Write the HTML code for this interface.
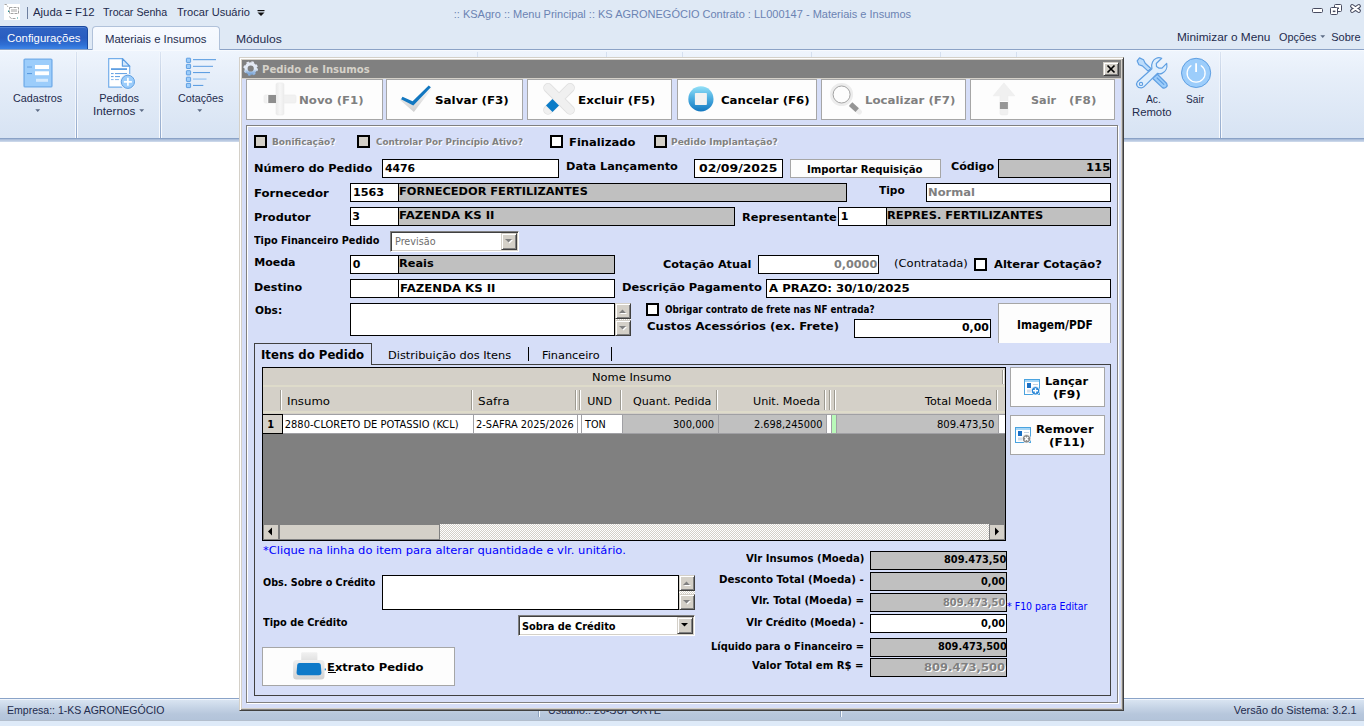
<!DOCTYPE html>
<html lang="pt-BR">
<head>
<meta charset="utf-8">
<title>KSAgro :: Menu Principal - Pedido de Insumos</title>
<style>
html,body{margin:0;padding:0;background:#fff;}
body{width:1364px;height:726px;overflow:hidden;}
#app{position:relative;width:1364px;height:726px;overflow:hidden;background:#fff;font-family:"Liberation Sans",sans-serif;}
#app div,#app svg{position:absolute;box-sizing:border-box;}
#app svg{overflow:visible;}
.t{white-space:pre;line-height:normal;transform-origin:0 0;}
.t u{text-decoration:underline;text-underline-offset:1px;}
.in{background:#fff;border:1px solid #000;}
.gr{background:#c0c0c0;border:1px solid #000;}
.btn{background:#fdfdfd;border:1px solid #a6a6a6;}
.cb{background:#fff;border:2px solid #000;}
.cbd{background:#d4d0c8;border:2px solid #000;}
.sb{background:#d4d0c8;border:1px solid;border-color:#d4d0c8 #404040 #404040 #d4d0c8;box-shadow:inset 1px 1px 0 #fff,inset -1px -1px 0 #808080;}
.fsb{background:#d4d0c8;border:1px solid #808080;}
.sunk{border:1px solid;border-color:#808080 #fff #fff #808080;box-shadow:inset 1px 1px 0 #404040,inset -1px -1px 0 #d4d0c8;background:#fff;}
.dith{background:conic-gradient(#fff 25%,#d4d0c8 0 50%,#fff 0 75%,#d4d0c8 0) 0 0/2px 2px;}

</style>
</head>
<body>
<div id="app">
<div style="left:0px;top:0px;width:1364px;height:50px;background:#dfe9f5;"></div>
<div style="left:0px;top:49px;width:1364px;height:1px;background:#8ba2c6;"></div>
<div style="left:0px;top:50px;width:1364px;height:88px;background:linear-gradient(#eff5fd 0%,#e6eef9 30%,#d7e3f3 100%);"></div>
<div style="left:0px;top:50px;width:1364px;height:1px;background:#f7fafe;"></div>
<div style="left:0px;top:138px;width:1364px;height:1px;background:#8aa2c6;"></div>
<div style="left:0px;top:139px;width:1364px;height:1px;background:#a9bcd9;"></div>
<div style="left:0px;top:140px;width:1364px;height:1px;background:#b9c9e1;"></div>
<div style="left:0px;top:141px;width:1364px;height:1px;background:#c9d6e9;"></div>
<div style="left:75px;top:52px;width:3px;height:86px;background:linear-gradient(rgba(255,255,255,0.2),rgba(255,255,255,0.85));"></div>
<div style="left:76px;top:52px;width:1px;height:86px;background:linear-gradient(rgba(150,172,205,0.25),#8fa7cb);"></div>
<div style="left:159px;top:52px;width:3px;height:86px;background:linear-gradient(rgba(255,255,255,0.2),rgba(255,255,255,0.85));"></div>
<div style="left:160px;top:52px;width:1px;height:86px;background:linear-gradient(rgba(150,172,205,0.25),#8fa7cb);"></div>
<div style="left:1219px;top:52px;width:3px;height:86px;background:linear-gradient(rgba(255,255,255,0.2),rgba(255,255,255,0.85));"></div>
<div style="left:1220px;top:52px;width:1px;height:86px;background:linear-gradient(rgba(150,172,205,0.25),#8fa7cb);"></div>
<div style="left:477px;top:52px;width:1px;height:6px;background:#d5e0f0;"></div>
<div style="left:606px;top:52px;width:1px;height:6px;background:#d5e0f0;"></div>
<div style="left:682px;top:52px;width:1px;height:6px;background:#d5e0f0;"></div>
<div style="left:811px;top:52px;width:1px;height:6px;background:#d5e0f0;"></div>
<div style="left:940px;top:52px;width:1px;height:6px;background:#d5e0f0;"></div>
<div style="left:1016px;top:52px;width:1px;height:6px;background:#d5e0f0;"></div>
<div style="left:4px;top:4px;width:16px;height:16px;background:#fff;"></div>
<svg style="left:3px;top:2px" width="19" height="19" viewBox="3 2 19 19"><path d="M4.500 4.500 H6.500 L8 7 M9.500 7.500 H18.500 V13.500 H9.500 Z M12 9 V12 M14 9 V12 M16 9 V12 M9.500 16.500 L11 18.500 H16.500" fill="none" stroke="#8a8a8a" stroke-width="0.800" stroke-dasharray="3 1"/><path d="M8.500 10.500 V12 M17 18 H18" stroke="#2a9a9a" stroke-width="1" fill="none"/></svg>
<div style="left:27px;top:7px;width:1px;height:12px;background:#6d7f9e;"></div>
<div class="t" style="left:32.75px;top:6.00px;font-family:&quot;Liberation Sans&quot;, sans-serif;font-size:11px;font-weight:normal;color:#1e2b4d;transform:scaleX(1.0339);">Ajuda = F12</div>
<div class="t" style="left:103.25px;top:6.00px;font-family:&quot;Liberation Sans&quot;, sans-serif;font-size:11px;font-weight:normal;color:#1e2b4d;transform:scaleX(0.9697);">Trocar Senha</div>
<div class="t" style="left:176.75px;top:6.00px;font-family:&quot;Liberation Sans&quot;, sans-serif;font-size:11px;font-weight:normal;color:#1e2b4d;transform:scaleX(1.0069);">Trocar Usuário</div>
<svg style="left:257px;top:9px" width="8" height="8" viewBox="257 9 8 8"><rect x="257.500" y="10" width="7" height="1.200" fill="#111"/><path d="M257.500 12.500 H264.500 L261 16 Z" fill="#111"/></svg>
<div class="t" style="left:453.75px;top:8.00px;font-family:&quot;Liberation Sans&quot;, sans-serif;font-size:11px;font-weight:normal;color:#6b83b3;">:: KSAgro :: Menu Principal :: KS AGRONEGÓCIO Contrato : LL000147 - Materiais e Insumos</div>
<svg style="left:1310px;top:2px" width="54" height="16" viewBox="1310 2 54 16"><rect x="1312.500" y="8.500" width="10" height="4" rx="1" fill="#fff" stroke="#474b60"/><rect x="1334.500" y="4.500" width="7" height="7" rx="1" fill="#fff" stroke="#474b60"/><rect x="1337" y="7.500" width="2" height="1.500" fill="#474b60"/><rect x="1330.500" y="7.500" width="7" height="7" rx="1" fill="#fff" stroke="#474b60"/><rect x="1332.800" y="10.600" width="2.600" height="1.500" fill="#474b60"/><path d="M1352.200 6.200 L1358.800 10.800 M1358.800 6.200 L1352.200 10.800" stroke="#474b60" stroke-width="4.200" stroke-linecap="round"/><path d="M1352.200 6.200 L1358.800 10.800 M1358.800 6.200 L1352.200 10.800" stroke="#fff" stroke-width="2.100" stroke-linecap="round"/></svg>
<div style="left:0px;top:26px;width:88px;height:23px;background:linear-gradient(#2f64c4 0%,#2a5dc0 50%,#2f6fd4 80%,#3d84e6 100%);border:1px solid #1a489e;border-left:none;border-bottom:none;border-radius:0 4px 0 0;box-shadow:inset 0 1px 0 rgba(120,160,230,0.5);"></div>
<div class="t" style="left:7.25px;top:32.00px;font-family:&quot;Liberation Sans&quot;, sans-serif;font-size:11px;font-weight:normal;color:#fff;transform:scaleX(1.0352);">Configurações</div>
<div style="left:92px;top:26px;width:128px;height:24px;background:linear-gradient(#f7faff,#f1f6fd);border:1px solid #b1c2da;border-bottom:none;border-radius:4px 4px 0 0;"></div>
<div class="t" style="left:105.22px;top:33.00px;font-family:&quot;Liberation Sans&quot;, sans-serif;font-size:11px;font-weight:normal;color:#1e2b4d;transform:scaleX(1.0309);">Materiais e Insumos</div>
<div class="t" style="left:236.15px;top:33.00px;font-family:&quot;Liberation Sans&quot;, sans-serif;font-size:11px;font-weight:normal;color:#1e2b4d;transform:scaleX(1.1000);">Módulos</div>
<div class="t" style="left:1177.17px;top:31.00px;font-family:&quot;Liberation Sans&quot;, sans-serif;font-size:11px;font-weight:normal;color:#1e2b4d;transform:scaleX(1.0765);">Minimizar o Menu</div>
<div class="t" style="left:1279.25px;top:31.00px;font-family:&quot;Liberation Sans&quot;, sans-serif;font-size:11px;font-weight:normal;color:#1e2b4d;transform:scaleX(0.9868);">Opções</div>
<svg style="left:1320px;top:35px" width="6" height="4" viewBox="1320 35 6 4"><path d="M1320.3 35.3 H1325.2 L1322.75 38 Z" fill="#5c6b85"/></svg>
<div class="t" style="left:1331.25px;top:31.00px;font-family:&quot;Liberation Sans&quot;, sans-serif;font-size:11px;font-weight:normal;color:#1e2b4d;">Sobre</div>
<div class="t" style="left:13.25px;top:92.00px;font-family:&quot;Liberation Sans&quot;, sans-serif;font-size:11px;font-weight:normal;color:#1e2b4d;transform:scaleX(0.9800);">Cadastros</div>
<div class="t" style="left:99.25px;top:92.00px;font-family:&quot;Liberation Sans&quot;, sans-serif;font-size:11px;font-weight:normal;color:#1e2b4d;">Pedidos</div>
<div class="t" style="left:92.69px;top:105.00px;font-family:&quot;Liberation Sans&quot;, sans-serif;font-size:11px;font-weight:normal;color:#1e2b4d;transform:scaleX(1.0641);">Internos</div>
<div class="t" style="left:178.25px;top:92.00px;font-family:&quot;Liberation Sans&quot;, sans-serif;font-size:11px;font-weight:normal;color:#1e2b4d;transform:scaleX(0.9783);">Cotações</div>
<div class="t" style="left:1145.75px;top:93.00px;font-family:&quot;Liberation Sans&quot;, sans-serif;font-size:11px;font-weight:normal;color:#1e2b4d;transform:scaleX(0.9333);">Ac.</div>
<div class="t" style="left:1132.22px;top:106.00px;font-family:&quot;Liberation Sans&quot;, sans-serif;font-size:11px;font-weight:normal;color:#1e2b4d;transform:scaleX(1.0270);">Remoto</div>
<div class="t" style="left:1186.33px;top:93.00px;font-family:&quot;Liberation Sans&quot;, sans-serif;font-size:11px;font-weight:normal;color:#1e2b4d;transform:scaleX(0.9211);">Sair</div>
<svg style="left:35px;top:109px" width="6" height="4" viewBox="35 109 6 4"><path d="M35.3 109.3 H40.2 L37.75 112 Z" fill="#5c6b85"/></svg>
<svg style="left:139px;top:109px" width="6" height="4" viewBox="139 109 6 4"><path d="M139.3 109.3 H144.2 L141.75 112 Z" fill="#5c6b85"/></svg>
<svg style="left:197px;top:109px" width="6" height="4" viewBox="197 109 6 4"><path d="M197.3 109.3 H202.2 L199.75 112 Z" fill="#5c6b85"/></svg>
<svg style="left:23px;top:58px" width="30" height="30" viewBox="23 58 30 30"><rect x="24.100" y="59.100" width="27.800" height="27.800" rx="1" fill="#9ccdfb" stroke="#74aeea" stroke-width="1.400"/><rect x="35" y="65" width="14" height="4" fill="#fff"/><rect x="35" y="71.300" width="14" height="3.900" fill="#fff"/><rect x="36" y="78.800" width="12" height="3" fill="#d6eafd"/><rect x="27" y="66.200" width="5" height="1.700" fill="#7db4ec"/><rect x="27" y="73" width="5" height="1.100" fill="#5a9be0"/></svg>
<svg style="left:107px;top:57px" width="30" height="33" viewBox="107 57 30 33"><path d="M108.700 58.700 H122.400 L129.700 66.200 V82 H129.700 V87.100 H108.700 Z" fill="#fff" stroke="#74aeea" stroke-width="1.200"/><path d="M122.400 58.700 V66.200 H129.700 Z" fill="#d4e8fc" stroke="#5f9fe2" stroke-width="1.200" stroke-linejoin="round"/><rect x="111" y="68.200" width="16" height="1.800" fill="#5f9fe2"/><g fill="#6aa5e4"><rect x="111" y="73" width="2.600" height="1.100"/><rect x="115" y="73" width="12" height="1.100"/><rect x="111" y="76" width="2.600" height="1.100"/><rect x="115" y="76" width="5" height="1.100"/><rect x="111" y="79" width="2.600" height="1.100" fill="#8fbdee"/><rect x="115" y="79" width="4" height="1.100" fill="#8fbdee"/></g><circle cx="127.900" cy="81.800" r="8" fill="#e9f1fb"/><circle cx="127.900" cy="81.800" r="6.600" fill="#9ccdfb" stroke="#5f9fe2" stroke-width="1"/><path d="M127.900 77.800 V85.800 M123.900 81.800 H131.900" stroke="#fff" stroke-width="1.700"/></svg>
<svg style="left:185px;top:57px" width="33" height="33" viewBox="185 57 33 33"><rect x="186.400" y="58.2" width="4.200" height="4.200" rx="0.500" fill="#9ccdfb" stroke="#5f9fe2" stroke-width="1"/><rect x="186.400" y="64.3" width="4.200" height="4.200" rx="0.500" fill="#9ccdfb" stroke="#5f9fe2" stroke-width="1"/><rect x="186.400" y="70.7" width="4.200" height="4.200" rx="0.500" fill="#9ccdfb" stroke="#5f9fe2" stroke-width="1"/><rect x="186.400" y="77.2" width="4.200" height="4.200" rx="0.500" fill="#9ccdfb" stroke="#5f9fe2" stroke-width="1"/><rect x="186.400" y="83.4" width="4.200" height="4.200" rx="0.500" fill="#9ccdfb" stroke="#5f9fe2" stroke-width="1"/><rect x="193" y="59.1" width="23" height="1.1" fill="#5f9fe2"/><rect x="193" y="65.8" width="20" height="1.1" fill="#6aa5e4"/><rect x="193" y="72" width="17" height="1.1" fill="#5f9fe2"/><rect x="193" y="78.3" width="13.5" height="1.6" fill="#a9cdf3"/><rect x="193" y="84.9" width="10.3" height="1.1" fill="#5f9fe2"/></svg>
<svg style="left:1136px;top:57px" width="32" height="32" viewBox="1136 57 32 32"><g stroke="#5f9fe2" stroke-width="1.200" stroke-linejoin="round" stroke-linecap="round"><path d="M1139.500 57.900 L1143.500 59.800 L1145.200 63.200 L1150.800 68.500 L1148.100 71.100 L1142.400 65.900 L1138.900 64.700 L1137.200 60.900 Z" fill="#bcdcfb"/><path d="M1157.400 74.300 L1166.700 83.500 C1168.300 86.200 1165.300 89.200 1162.400 87.600 L1152.500 78.300 Z" fill="#9ccdfb"/><path d="M1157.100 78 L1163.800 84.400" fill="none"/><path d="M1161.700 58.200 C1159.500 57.500 1157.500 57.700 1156.300 58.300 C1153.500 59.500 1150.500 63.500 1151.900 68.800 L1137.400 81.800 C1135.700 84 1136.700 87.900 1141.200 87.900 C1142.500 87.900 1143.400 87.400 1144.100 86.700 L1157.400 73.400 C1159.500 74.300 1161 73.900 1162 73.400 C1165.500 72 1167.600 68 1166.700 63.300 L1162 68.200 L1159.100 68.200 L1156.500 66.400 L1156.300 63.500 Z" fill="#deeefd"/><circle cx="1141" cy="83.900" r="1.600" fill="#f1f7fe"/></g></svg>
<svg style="left:1180px;top:57px" width="32" height="32" viewBox="1180 57 32 32"><circle cx="1196.100" cy="72.900" r="14.600" fill="#9ccdfb" stroke="#5f9fe2" stroke-width="1"/><path d="M1191 65.800 A9 9 0 1 0 1201.200 65.800" fill="none" stroke="#fff" stroke-width="1.300" stroke-linecap="round"/><path d="M1196.100 63.300 V72" stroke="#fff" stroke-width="1.800"/></svg>
<div style="left:0px;top:698px;width:1364px;height:1px;background:#8aa3c8;"></div>
<div style="left:0px;top:699px;width:1364px;height:1px;background:#f0f5fc;"></div>
<div style="left:0px;top:700px;width:1364px;height:20px;background:linear-gradient(#d9e4f1 0%,#c5d3e5 40%,#b7c7dc 70%,#b3c4da 100%);"></div>
<div style="left:0px;top:720px;width:1364px;height:1px;background:#b3becd;"></div>
<div style="left:0px;top:721px;width:1364px;height:5px;background:#deeaf8;"></div>
<div class="t" style="left:7.29px;top:704.00px;font-family:&quot;Liberation Sans&quot;, sans-serif;font-size:11px;font-weight:normal;color:#1e2b4d;transform:scaleX(0.9571);">Empresa:: 1-KS AGRONEGÓCIO</div>
<div class="t" style="left:547.78px;top:704.00px;font-family:&quot;Liberation Sans&quot;, sans-serif;font-size:11px;font-weight:normal;color:#1e2b4d;transform:scaleX(0.9739);">Usuário:: 26-SUPORTE</div>
<div class="t" style="left:1233.75px;top:704.00px;font-family:&quot;Liberation Sans&quot;, sans-serif;font-size:11px;font-weight:normal;color:#1e2b4d;">Versão do Sistema: 3.2.1</div>
<div style="left:538px;top:702px;width:1px;height:15px;background:#8ea3c0;"></div>
<div style="left:539px;top:702px;width:1px;height:15px;background:#f4f8fc;"></div>
<div style="left:840px;top:702px;width:1px;height:15px;background:#8ea3c0;"></div>
<div style="left:841px;top:702px;width:1px;height:15px;background:#f4f8fc;"></div>
<div style="left:239px;top:57px;width:885px;height:654px;background:#d6def8;border:1px solid;border-color:#d4d0c8 #404040 #404040 #d4d0c8;box-shadow:inset 1px 1px 0 #fff, inset -1px -1px 0 #808080, inset 2px 2px 0 #d4d0c8, inset -2px -2px 0 #d4d0c8;"></div>
<div style="left:242px;top:60px;width:879px;height:18px;background:#808080;"></div>
<div style="left:242px;top:78px;width:879px;height:1px;background:#d4d0c8;"></div>
<svg style="left:243px;top:60px" width="16" height="17" viewBox="243 60 16 17"><defs><linearGradient id="gg" x1="0" y1="0" x2="0" y2="1"><stop offset="0" stop-color="#e4e9f4"/><stop offset="0.55" stop-color="#e3ecf8"/><stop offset="1" stop-color="#7fa9da"/></linearGradient></defs><circle cx="250.700" cy="68.500" r="4.700" fill="none" stroke="url(#gg)" stroke-width="3.200"/><circle cx="250.700" cy="68.500" r="6.500" fill="none" stroke="url(#gg)" stroke-width="1.600" stroke-dasharray="2.500 2.600"/></svg>
<div class="t" style="left:262.03px;top:63.00px;font-family:&quot;DejaVu Sans Condensed&quot;, &quot;Liberation Sans&quot;, sans-serif;font-size:11px;font-weight:bold;color:#d6d2c9;transform:scaleX(1.0192);">Pedido de Insumos</div>
<div class="sb" style="left:1103px;top:62px;width:16px;height:14px;"></div>
<svg style="left:1106px;top:64px" width="10" height="10" viewBox="1106 64 10 10"><path d="M1107.500 65.500 L1114.500 72.500 M1114.500 65.500 L1107.500 72.500" stroke="#000" stroke-width="1.700"/></svg>
<div class="btn" style="left:246px;top:79px;width:137px;height:41px;"></div>
<div class="btn" style="left:386px;top:79px;width:137px;height:41px;"></div>
<div class="btn" style="left:527px;top:79px;width:145px;height:41px;"></div>
<div class="btn" style="left:677px;top:79px;width:140px;height:41px;"></div>
<div class="btn" style="left:821px;top:79px;width:145px;height:41px;"></div>
<div class="btn" style="left:970px;top:79px;width:145px;height:41px;"></div>
<div class="t" style="left:299.18px;top:94.00px;font-family:&quot;DejaVu Sans&quot;, &quot;Liberation Sans&quot;, sans-serif;font-size:11px;font-weight:bold;color:#808080;transform:scaleX(1.0678);text-shadow:1px 1px 0 #fff;">Novo (F1)</div>
<div class="t" style="left:434.67px;top:94.00px;font-family:&quot;DejaVu Sans&quot;, &quot;Liberation Sans&quot;, sans-serif;font-size:11px;font-weight:bold;color:#000;transform:scaleX(1.0821);">Salvar (F3)</div>
<div class="t" style="left:578.16px;top:94.00px;font-family:&quot;DejaVu Sans&quot;, &quot;Liberation Sans&quot;, sans-serif;font-size:11px;font-weight:bold;color:#000;transform:scaleX(1.0870);">Excluir (F5)</div>
<div class="t" style="left:720.75px;top:94.00px;font-family:&quot;DejaVu Sans&quot;, &quot;Liberation Sans&quot;, sans-serif;font-size:11px;font-weight:bold;color:#000;transform:scaleX(1.0671);">Cancelar (F6)</div>
<div class="t" style="left:865.18px;top:94.00px;font-family:&quot;DejaVu Sans&quot;, &quot;Liberation Sans&quot;, sans-serif;font-size:11px;font-weight:bold;color:#808080;transform:scaleX(1.0723);text-shadow:1px 1px 0 #fff;">Localizar (F7)</div>
<div class="t" style="left:1030.73px;top:94.00px;font-family:&quot;DejaVu Sans&quot;, &quot;Liberation Sans&quot;, sans-serif;font-size:11px;font-weight:bold;color:#808080;transform:scaleX(1.0208);text-shadow:1px 1px 0 #fff;">Sair</div>
<div class="t" style="left:1069.17px;top:94.00px;font-family:&quot;DejaVu Sans&quot;, &quot;Liberation Sans&quot;, sans-serif;font-size:11px;font-weight:bold;color:#808080;transform:scaleX(1.0833);text-shadow:1px 1px 0 #fff;">(F8)</div>
<svg style="left:262px;top:81px" width="36" height="36" viewBox="262 81 36 36"><defs><linearGradient id="lg1" x1="0" y1="0" x2="1" y2="0"><stop offset="0" stop-color="#e9e9e9"/><stop offset="0.5" stop-color="#f7f7f7"/><stop offset="1" stop-color="#ececec"/></linearGradient></defs><rect x="264" y="95" width="32" height="8" rx="1.500" fill="#f1f1f1" stroke="#ebebeb" stroke-width="0.600"/><rect x="276" y="83" width="8" height="32" rx="1.500" fill="url(#lg1)" stroke="#ececec" stroke-width="0.600"/><rect x="267.300" y="95" width="1" height="8" fill="#fdfdfd"/><rect x="268.300" y="95" width="7.700" height="8" fill="#8e8e8e"/></svg>
<svg style="left:398px;top:82px" width="36" height="34" viewBox="398 82 36 34"><defs><linearGradient id="lg2" x1="0" y1="0" x2="0" y2="1"><stop offset="0" stop-color="#fafafa"/><stop offset="1" stop-color="#cfcfcf"/></linearGradient></defs><path d="M400 100 L401.300 98.500 L413.100 104.500 L430.500 86.800 L431.900 88.600 L413.900 112 Z" fill="url(#lg2)"/><path d="M401.100 99.200 L402.500 96.700 L412.600 101.200 L428.700 85.600 L430.900 87.300 L413.300 105.500 Z" fill="#1277c0"/></svg>
<svg style="left:541px;top:81px" width="36" height="36" viewBox="541 81 36 36"><path d="M548 87.800 L570.100 109.900 M570.100 87.800 L548 109.900" stroke="#e0e0e0" stroke-width="9.600" stroke-linecap="round"/><path d="M548 87.800 L570.100 109.900 M570.100 87.800 L548 109.900" stroke="#f0f0f0" stroke-width="7.800" stroke-linecap="round"/><path d="M552.500 98.900 L559 105.400 L552.500 112 L546 105.400 Z" fill="#0b7cc8"/></svg>
<svg style="left:688px;top:86px" width="26" height="26" viewBox="688 86 26 26"><defs><linearGradient id="cg" x1="0" y1="0" x2="0" y2="1"><stop offset="0" stop-color="#93e0f7"/><stop offset="0.45" stop-color="#4fb0e2"/><stop offset="1" stop-color="#1277c0"/></linearGradient></defs><circle cx="700.900" cy="98.950" r="12.600" fill="url(#cg)"/><rect x="694.900" y="93" width="12" height="12" rx="0.800" fill="#f2f2f2"/></svg>
<svg style="left:829px;top:82px" width="34" height="34" viewBox="829 82 34 34"><path d="M852 105.400 L859.300 112" stroke="#eeeeee" stroke-width="5.200" stroke-linecap="round"/><path d="M850.600 104.100 L857.200 110.100" stroke="#959595" stroke-width="5"/><circle cx="841.600" cy="94.500" r="10.100" fill="none" stroke="#ececec" stroke-width="2.800"/><circle cx="841.600" cy="94.500" r="8.500" fill="#fdfdfd" stroke="#8c8c8c" stroke-width="0.800"/></svg>
<svg style="left:992px;top:82px" width="24" height="34" viewBox="992 82 24 34"><path d="M1003.900 82.800 L1014.900 95.800 H1007.900 V113.400 Q1007.900 114.900 1006.400 114.900 H1001.400 Q999.900 114.900 999.900 113.400 V95.800 H993.100 Z" fill="#f0f0f0" stroke="#ededed" stroke-width="0.500"/><rect x="999.900" y="101" width="8" height="1" fill="#fdfdfd"/><rect x="999.900" y="102" width="8" height="7" fill="#979797"/></svg>
<div style="left:247px;top:126px;width:872px;height:578px;border:1px solid #fff;"></div>
<div style="left:246px;top:125px;width:872px;height:578px;border:1px solid #808080;"></div>
<div class="cbd" style="left:254px;top:135px;width:13px;height:13px;"></div>
<div class="t" style="left:271.80px;top:136.00px;font-family:&quot;DejaVu Sans&quot;, &quot;Liberation Sans&quot;, sans-serif;font-size:9.5px;font-weight:bold;color:#808080;transform:scaleX(0.9470);text-shadow:1px 1px 0 #fff;">Bonificação?</div>
<div class="cbd" style="left:357px;top:135px;width:13px;height:13px;"></div>
<div class="t" style="left:375.75px;top:136.00px;font-family:&quot;DejaVu Sans&quot;, &quot;Liberation Sans&quot;, sans-serif;font-size:9.5px;font-weight:bold;color:#808080;transform:scaleX(0.9245);text-shadow:1px 1px 0 #fff;">Controlar Por Princípio Ativo?</div>
<div class="cb" style="left:550px;top:135px;width:13px;height:13px;"></div>
<div class="t" style="left:569.20px;top:136.00px;font-family:&quot;DejaVu Sans&quot;, &quot;Liberation Sans&quot;, sans-serif;font-size:11px;font-weight:bold;color:#000;transform:scaleX(1.0484);">Finalizado</div>
<div class="cbd" style="left:654px;top:135px;width:13px;height:13px;"></div>
<div class="t" style="left:671.30px;top:136.00px;font-family:&quot;DejaVu Sans&quot;, &quot;Liberation Sans&quot;, sans-serif;font-size:9.5px;font-weight:bold;color:#808080;transform:scaleX(0.9545);text-shadow:1px 1px 0 #fff;">Pedido Implantação?</div>
<div class="t" style="left:254.22px;top:162.00px;font-family:&quot;DejaVu Sans&quot;, &quot;Liberation Sans&quot;, sans-serif;font-size:11px;font-weight:bold;color:#000;transform:scaleX(1.0310);">Número do Pedido</div>
<div class="in" style="left:382px;top:159px;width:177px;height:19px;"></div>
<div class="t" style="left:385.25px;top:162.00px;font-family:&quot;DejaVu Sans&quot;, &quot;Liberation Sans&quot;, sans-serif;font-size:11px;font-weight:bold;color:#000;transform:scaleX(0.9833);">4476</div>
<div class="t" style="left:566.22px;top:160.00px;font-family:&quot;DejaVu Sans&quot;, &quot;Liberation Sans&quot;, sans-serif;font-size:11px;font-weight:bold;color:#000;transform:scaleX(1.0278);">Data Lançamento</div>
<div class="in" style="left:694px;top:159px;width:89px;height:19px;"></div>
<div class="t" style="left:699.25px;top:162.00px;font-family:&quot;DejaVu Sans&quot;, &quot;Liberation Sans&quot;, sans-serif;font-size:11px;font-weight:bold;color:#000;transform:scaleX(1.1304);">02/09/2025</div>
<div class="btn" style="left:790px;top:159px;width:151px;height:19px;"></div>
<div class="t" style="left:806.73px;top:163.00px;font-family:&quot;DejaVu Sans Condensed&quot;, &quot;Liberation Sans&quot;, sans-serif;font-size:11px;font-weight:bold;color:#000;transform:scaleX(1.0223);">Importar Requisição</div>
<div class="t" style="left:950.75px;top:160.00px;font-family:&quot;DejaVu Sans&quot;, &quot;Liberation Sans&quot;, sans-serif;font-size:11px;font-weight:bold;color:#000;transform:scaleX(1.0116);">Código</div>
<div class="gr" style="left:998px;top:159px;width:113px;height:19px;"></div>
<div class="t" style="left:1086.24px;top:161.00px;font-family:&quot;DejaVu Sans&quot;, &quot;Liberation Sans&quot;, sans-serif;font-size:11px;font-weight:bold;color:#000;transform:scaleX(1.0571);">115</div>
<div class="t" style="left:254.18px;top:187.00px;font-family:&quot;DejaVu Sans&quot;, &quot;Liberation Sans&quot;, sans-serif;font-size:11px;font-weight:bold;color:#000;transform:scaleX(1.0652);">Fornecedor</div>
<div class="gr" style="left:350px;top:183px;width:497px;height:19px;"></div>
<div style="left:351px;top:184px;width:48px;height:17px;background:#fff;border-right:1px solid #000;"></div>
<div class="t" style="left:352.73px;top:186.00px;font-family:&quot;DejaVu Sans&quot;, &quot;Liberation Sans&quot;, sans-serif;font-size:11px;font-weight:bold;color:#000;transform:scaleX(1.0172);">1563</div>
<div class="t" style="left:398.92px;top:185.00px;font-family:&quot;DejaVu Sans&quot;, &quot;Liberation Sans&quot;, sans-serif;font-size:11px;font-weight:bold;color:#000;transform:scaleX(1.0331);">FORNECEDOR FERTILIZANTES</div>
<div class="t" style="left:879.25px;top:184.00px;font-family:&quot;DejaVu Sans&quot;, &quot;Liberation Sans&quot;, sans-serif;font-size:11px;font-weight:bold;color:#000;transform:scaleX(0.9630);">Tipo</div>
<div class="in" style="left:926px;top:183px;width:185px;height:19px;"></div>
<div class="t" style="left:928.20px;top:186.00px;font-family:&quot;DejaVu Sans&quot;, &quot;Liberation Sans&quot;, sans-serif;font-size:11px;font-weight:bold;color:#808080;transform:scaleX(1.0465);">Normal</div>
<div class="t" style="left:254.22px;top:211.00px;font-family:&quot;DejaVu Sans&quot;, &quot;Liberation Sans&quot;, sans-serif;font-size:11px;font-weight:bold;color:#000;transform:scaleX(1.0278);">Produtor</div>
<div class="gr" style="left:350px;top:207px;width:385px;height:19px;"></div>
<div style="left:351px;top:208px;width:48px;height:17px;background:#fff;border-right:1px solid #000;"></div>
<div class="t" style="left:352.25px;top:210.00px;font-family:&quot;DejaVu Sans&quot;, &quot;Liberation Sans&quot;, sans-serif;font-size:11px;font-weight:bold;color:#000;">3</div>
<div class="t" style="left:398.88px;top:209.00px;font-family:&quot;DejaVu Sans&quot;, &quot;Liberation Sans&quot;, sans-serif;font-size:11px;font-weight:bold;color:#000;transform:scaleX(1.0682);">FAZENDA KS II</div>
<div class="t" style="left:742.22px;top:211.00px;font-family:&quot;DejaVu Sans&quot;, &quot;Liberation Sans&quot;, sans-serif;font-size:11px;font-weight:bold;color:#000;transform:scaleX(1.0333);">Representante</div>
<div class="gr" style="left:838px;top:207px;width:273px;height:19px;"></div>
<div style="left:839px;top:208px;width:48px;height:17px;background:#fff;border-right:1px solid #000;"></div>
<div class="t" style="left:840.75px;top:210.00px;font-family:&quot;DejaVu Sans&quot;, &quot;Liberation Sans&quot;, sans-serif;font-size:11px;font-weight:bold;color:#000;">1</div>
<div class="t" style="left:887.01px;top:209.00px;font-family:&quot;DejaVu Sans&quot;, &quot;Liberation Sans&quot;, sans-serif;font-size:11px;font-weight:bold;color:#000;transform:scaleX(1.0403);">REPRES. FERTILIZANTES</div>
<div class="t" style="left:254.25px;top:234.00px;font-family:&quot;DejaVu Sans Condensed&quot;, &quot;Liberation Sans&quot;, sans-serif;font-size:11px;font-weight:bold;color:#000;transform:scaleX(0.9805);">Tipo Financeiro Pedido</div>
<div class="sunk" style="left:390px;top:231px;width:129px;height:21px;"></div>
<div class="t" style="left:394.77px;top:235.00px;font-family:&quot;DejaVu Sans Condensed&quot;, &quot;Liberation Sans&quot;, sans-serif;font-size:11px;font-weight:normal;color:#6d6d6d;transform:scaleX(0.9750);">Previsão</div>
<div class="sb" style="left:501px;top:233px;width:16px;height:17px;"></div>
<svg style="left:505px;top:239px" width="9" height="6" viewBox="505 239 9 6"><path d="M506 240 H513 L509.500 243.500 Z" fill="#fff"/><path d="M505 239 H512 L508.500 242.500 Z" fill="#808080"/></svg>
<div class="t" style="left:254.25px;top:256.00px;font-family:&quot;DejaVu Sans&quot;, &quot;Liberation Sans&quot;, sans-serif;font-size:11px;font-weight:bold;color:#000;">Moeda</div>
<div class="gr" style="left:350px;top:255px;width:265px;height:19px;"></div>
<div style="left:351px;top:256px;width:48px;height:17px;background:#fff;border-right:1px solid #000;"></div>
<div class="t" style="left:352.75px;top:258.00px;font-family:&quot;DejaVu Sans&quot;, &quot;Liberation Sans&quot;, sans-serif;font-size:11px;font-weight:bold;color:#000;">0</div>
<div class="t" style="left:398.92px;top:257.00px;font-family:&quot;DejaVu Sans&quot;, &quot;Liberation Sans&quot;, sans-serif;font-size:11px;font-weight:bold;color:#000;transform:scaleX(1.0312);">Reais</div>
<div class="t" style="left:663.25px;top:258.00px;font-family:&quot;DejaVu Sans&quot;, &quot;Liberation Sans&quot;, sans-serif;font-size:11px;font-weight:bold;color:#000;transform:scaleX(1.0233);">Cotação Atual</div>
<div class="in" style="left:758px;top:255px;width:121px;height:19px;"></div>
<div class="t" style="left:833.80px;top:258.00px;font-family:&quot;DejaVu Sans&quot;, &quot;Liberation Sans&quot;, sans-serif;font-size:11px;font-weight:bold;color:#808080;transform:scaleX(1.0167);text-shadow:1px 1px 0 #fff;">0,0000</div>
<div class="t" style="left:893.70px;top:257.00px;font-family:&quot;DejaVu Sans&quot;, &quot;Liberation Sans&quot;, sans-serif;font-size:11px;font-weight:normal;color:#000;transform:scaleX(1.0507);">(Contratada)</div>
<div class="cb" style="left:974px;top:258px;width:13px;height:13px;"></div>
<div class="t" style="left:994.25px;top:258.00px;font-family:&quot;DejaVu Sans&quot;, &quot;Liberation Sans&quot;, sans-serif;font-size:11px;font-weight:bold;color:#000;transform:scaleX(1.0437);">Alterar Cotação?</div>
<div class="t" style="left:254.24px;top:281.00px;font-family:&quot;DejaVu Sans&quot;, &quot;Liberation Sans&quot;, sans-serif;font-size:11px;font-weight:bold;color:#000;transform:scaleX(1.0109);">Destino</div>
<div class="in" style="left:350px;top:279px;width:265px;height:19px;"></div>
<div style="left:398px;top:280px;width:1px;height:17px;background:#000;"></div>
<div class="t" style="left:400.18px;top:282.00px;font-family:&quot;DejaVu Sans&quot;, &quot;Liberation Sans&quot;, sans-serif;font-size:11px;font-weight:bold;color:#000;transform:scaleX(1.0682);">FAZENDA KS II</div>
<div class="t" style="left:622.21px;top:281.00px;font-family:&quot;DejaVu Sans&quot;, &quot;Liberation Sans&quot;, sans-serif;font-size:11px;font-weight:bold;color:#000;transform:scaleX(1.0414);">Descrição Pagamento</div>
<div class="in" style="left:766px;top:279px;width:345px;height:19px;"></div>
<div class="t" style="left:769.25px;top:282.00px;font-family:&quot;DejaVu Sans&quot;, &quot;Liberation Sans&quot;, sans-serif;font-size:11px;font-weight:bold;color:#000;transform:scaleX(1.0644);">A PRAZO: 30/10/2025</div>
<div class="t" style="left:255.25px;top:304.00px;font-family:&quot;DejaVu Sans&quot;, &quot;Liberation Sans&quot;, sans-serif;font-size:11px;font-weight:bold;color:#000;transform:scaleX(0.9630);">Obs:</div>
<div class="in" style="left:350px;top:303px;width:265px;height:33px;"></div>
<div class="sb" style="left:615px;top:303px;width:16px;height:16px;"></div>
<div class="sb" style="left:615px;top:320px;width:16px;height:16px;"></div>
<div class="dith" style="left:615px;top:319px;width:16px;height:1px;"></div>
<svg style="left:618px;top:308px" width="11" height="7" viewBox="618 308 11 7"><path d="M620 314 H627 L623.5 310.5 Z" fill="#fff"/><path d="M619 313 H626 L622.5 309.5 Z" fill="#808080"/></svg>
<svg style="left:618px;top:325px" width="11" height="7" viewBox="618 325 11 7"><path d="M620 327 H627 L623.5 330.5 Z" fill="#fff"/><path d="M619 326 H626 L622.5 329.5 Z" fill="#808080"/></svg>
<div class="cb" style="left:646px;top:303px;width:13px;height:13px;"></div>
<div class="t" style="left:665.25px;top:304.00px;font-family:&quot;DejaVu Sans Condensed&quot;, &quot;Liberation Sans&quot;, sans-serif;font-size:10px;font-weight:bold;color:#000;transform:scaleX(0.9766);">Obrigar contrato de frete nas NF entrada?</div>
<div class="t" style="left:647.25px;top:320.00px;font-family:&quot;DejaVu Sans&quot;, &quot;Liberation Sans&quot;, sans-serif;font-size:11px;font-weight:bold;color:#000;transform:scaleX(1.0611);">Custos Acessórios (ex. Frete)</div>
<div class="in" style="left:854px;top:319px;width:137px;height:19px;"></div>
<div class="t" style="left:961.80px;top:321.00px;font-family:&quot;DejaVu Sans&quot;, &quot;Liberation Sans&quot;, sans-serif;font-size:11px;font-weight:bold;color:#000;transform:scaleX(0.9889);">0,00</div>
<div class="btn" style="left:998px;top:303px;width:113px;height:40px;border-bottom:none;"></div>
<div class="t" style="left:1016.72px;top:318.00px;font-family:&quot;DejaVu Sans Condensed&quot;, &quot;Liberation Sans&quot;, sans-serif;font-size:11.5px;font-weight:bold;color:#000;transform:scaleX(1.0278);">Imagem/PDF</div>
<div style="left:254px;top:364px;width:857px;height:332px;border:1px solid #404040;background:#d6def8;"></div>
<div style="left:254px;top:343px;width:118px;height:22px;border:1px solid #404040;border-bottom:none;background:#d6def8;"></div>
<div class="t" style="left:260.77px;top:348.00px;font-family:&quot;DejaVu Sans&quot;, &quot;Liberation Sans&quot;, sans-serif;font-size:12px;font-weight:bold;color:#000;transform:scaleX(0.9760);">Itens do Pedido</div>
<div class="t" style="left:388.22px;top:349.00px;font-family:&quot;DejaVu Sans&quot;, &quot;Liberation Sans&quot;, sans-serif;font-size:11px;font-weight:normal;color:#000;transform:scaleX(1.0339);">Distribuição dos Itens</div>
<div style="left:528px;top:347px;width:1px;height:14px;background:#000;"></div>
<div class="t" style="left:541.72px;top:349.00px;font-family:&quot;DejaVu Sans&quot;, &quot;Liberation Sans&quot;, sans-serif;font-size:11px;font-weight:normal;color:#000;transform:scaleX(1.0273);">Financeiro</div>
<div style="left:611px;top:347px;width:1px;height:14px;background:#000;"></div>
<div style="left:262px;top:367px;width:744px;height:174px;background:#808080;border:1px solid #000;"></div>
<div style="left:263px;top:368px;width:742px;height:46px;background:#d4d0c8;"></div>
<div style="left:263px;top:385px;width:742px;height:2px;background:#dedbca;"></div>
<div style="left:263px;top:411px;width:742px;height:2px;background:#dedbca;"></div>
<div style="left:263px;top:413px;width:742px;height:1px;background:#d4d0c8;"></div>
<div style="left:263px;top:414px;width:742px;height:1px;background:#a0a0a4;"></div>
<div class="t" style="left:592.21px;top:370.50px;font-family:&quot;DejaVu Sans&quot;, &quot;Liberation Sans&quot;, sans-serif;font-size:11px;font-weight:normal;color:#000;transform:scaleX(1.0400);">Nome Insumo</div>
<div style="left:280px;top:390px;width:1px;height:20px;background:#9d9a91;"></div>
<div style="left:281px;top:390px;width:1px;height:20px;background:#fff;"></div>
<div style="left:471px;top:390px;width:1px;height:20px;background:#9d9a91;"></div>
<div style="left:472px;top:390px;width:1px;height:20px;background:#fff;"></div>
<div style="left:575px;top:390px;width:1px;height:20px;background:#9d9a91;"></div>
<div style="left:576px;top:390px;width:1px;height:20px;background:#fff;"></div>
<div style="left:579px;top:390px;width:1px;height:20px;background:#9d9a91;"></div>
<div style="left:580px;top:390px;width:1px;height:20px;background:#fff;"></div>
<div style="left:620px;top:390px;width:1px;height:20px;background:#9d9a91;"></div>
<div style="left:621px;top:390px;width:1px;height:20px;background:#fff;"></div>
<div style="left:716px;top:390px;width:1px;height:20px;background:#9d9a91;"></div>
<div style="left:717px;top:390px;width:1px;height:20px;background:#fff;"></div>
<div style="left:824px;top:390px;width:1px;height:20px;background:#9d9a91;"></div>
<div style="left:825px;top:390px;width:1px;height:20px;background:#fff;"></div>
<div style="left:829px;top:390px;width:1px;height:20px;background:#9d9a91;"></div>
<div style="left:830px;top:390px;width:1px;height:20px;background:#fff;"></div>
<div style="left:834px;top:390px;width:1px;height:20px;background:#9d9a91;"></div>
<div style="left:835px;top:390px;width:1px;height:20px;background:#fff;"></div>
<div style="left:996px;top:390px;width:1px;height:20px;background:#9d9a91;"></div>
<div style="left:997px;top:390px;width:1px;height:20px;background:#fff;"></div>
<div style="left:1002px;top:370px;width:1px;height:14px;background:#9d9a91;"></div>
<div style="left:1003px;top:370px;width:1px;height:14px;background:#fff;"></div>
<div class="t" style="left:287.19px;top:395.00px;font-family:&quot;DejaVu Sans&quot;, &quot;Liberation Sans&quot;, sans-serif;font-size:11px;font-weight:normal;color:#000;transform:scaleX(1.0641);">Insumo</div>
<div class="t" style="left:477.66px;top:395.00px;font-family:&quot;DejaVu Sans&quot;, &quot;Liberation Sans&quot;, sans-serif;font-size:11px;font-weight:normal;color:#000;transform:scaleX(1.0926);">Safra</div>
<div class="t" style="left:587.25px;top:395.00px;font-family:&quot;DejaVu Sans&quot;, &quot;Liberation Sans&quot;, sans-serif;font-size:11px;font-weight:normal;color:#000;">UND</div>
<div class="t" style="left:633.25px;top:395.00px;font-family:&quot;DejaVu Sans&quot;, &quot;Liberation Sans&quot;, sans-serif;font-size:11px;font-weight:normal;color:#000;transform:scaleX(1.0130);">Quant. Pedida</div>
<div class="t" style="left:753.23px;top:395.00px;font-family:&quot;DejaVu Sans&quot;, &quot;Liberation Sans&quot;, sans-serif;font-size:11px;font-weight:normal;color:#000;transform:scaleX(1.0156);">Unit. Moeda</div>
<div class="t" style="left:925.25px;top:395.00px;font-family:&quot;DejaVu Sans&quot;, &quot;Liberation Sans&quot;, sans-serif;font-size:11px;font-weight:normal;color:#000;transform:scaleX(1.0154);">Total Moeda</div>
<div style="left:263px;top:415px;width:742px;height:19px;background:#a0a0a4;"></div>
<div style="left:263px;top:414px;width:20px;height:20px;background:#000;"></div>
<div style="left:263px;top:415px;width:19px;height:18px;background:#d4d0c8;"></div>
<div class="t" style="left:267.25px;top:418.00px;font-family:&quot;DejaVu Sans Condensed&quot;, &quot;Liberation Sans&quot;, sans-serif;font-size:11px;font-weight:bold;color:#000;">1</div>
<div style="left:283px;top:415px;width:190px;height:18px;background:#fff;"></div>
<div style="left:474px;top:415px;width:103px;height:18px;background:#fff;"></div>
<div style="left:578px;top:415px;width:3px;height:18px;background:#fff;"></div>
<div style="left:582px;top:415px;width:40px;height:18px;background:#fff;"></div>
<div style="left:623px;top:415px;width:95px;height:18px;background:#c0c0c0;"></div>
<div style="left:719px;top:415px;width:107px;height:18px;background:#c0c0c0;"></div>
<div style="left:827px;top:415px;width:4px;height:18px;background:#fff;"></div>
<div style="left:832px;top:415px;width:4px;height:18px;background:#b9f9b9;"></div>
<div style="left:837px;top:415px;width:161px;height:18px;background:#c0c0c0;"></div>
<div style="left:999px;top:415px;width:6px;height:18px;background:#fff;"></div>
<div class="t" style="left:284.75px;top:418.00px;font-family:&quot;DejaVu Sans Condensed&quot;, &quot;Liberation Sans&quot;, sans-serif;font-size:11px;font-weight:normal;color:#000;">2880-CLORETO DE POTASSIO (KCL)</div>
<div class="t" style="left:475.76px;top:418.00px;font-family:&quot;DejaVu Sans Condensed&quot;, &quot;Liberation Sans&quot;, sans-serif;font-size:11px;font-weight:normal;color:#000;transform:scaleX(0.9897);">2-SAFRA 2025/2026</div>
<div class="t" style="left:584.75px;top:418.00px;font-family:&quot;DejaVu Sans Condensed&quot;, &quot;Liberation Sans&quot;, sans-serif;font-size:11px;font-weight:normal;color:#000;transform:scaleX(0.9750);">TON</div>
<div class="t" style="left:673.09px;top:418.00px;font-family:&quot;DejaVu Sans Condensed&quot;, &quot;Liberation Sans&quot;, sans-serif;font-size:11px;font-weight:normal;color:#000;transform:scaleX(1.0051);">300,000</div>
<div class="t" style="left:754.31px;top:418.00px;font-family:&quot;DejaVu Sans Condensed&quot;, &quot;Liberation Sans&quot;, sans-serif;font-size:11px;font-weight:normal;color:#000;transform:scaleX(0.9882);">2.698,245000</div>
<div class="t" style="left:937.29px;top:418.00px;font-family:&quot;DejaVu Sans Condensed&quot;, &quot;Liberation Sans&quot;, sans-serif;font-size:11px;font-weight:normal;color:#000;transform:scaleX(1.0127);">809.473,50</div>
<div class="dith" style="left:263px;top:524px;width:742px;height:16px;"></div>
<div class="fsb" style="left:263px;top:524px;width:16px;height:16px;"></div>
<div class="fsb" style="left:279px;top:524px;width:161px;height:16px;"></div>
<div class="fsb" style="left:989px;top:524px;width:16px;height:16px;"></div>
<svg style="left:267px;top:527px" width="6" height="9" viewBox="267 527 6 9"><path d="M272 527.600 V535.400 L268 531.500 Z" fill="#000"/></svg>
<svg style="left:994px;top:527px" width="6" height="9" viewBox="994 527 6 9"><path d="M995 527.600 V535.400 L999 531.500 Z" fill="#000"/></svg>
<div class="btn" style="left:1010px;top:367px;width:95px;height:40px;"></div>
<div class="btn" style="left:1010px;top:415px;width:95px;height:40px;"></div>
<div class="t" style="left:1045.21px;top:375.00px;font-family:&quot;DejaVu Sans&quot;, &quot;Liberation Sans&quot;, sans-serif;font-size:11px;font-weight:bold;color:#000;transform:scaleX(1.0366);">Lançar</div>
<div class="t" style="left:1053.15px;top:388.00px;font-family:&quot;DejaVu Sans&quot;, &quot;Liberation Sans&quot;, sans-serif;font-size:11px;font-weight:bold;color:#000;transform:scaleX(1.1042);">(F9)</div>
<div class="t" style="left:1036.20px;top:423.00px;font-family:&quot;DejaVu Sans&quot;, &quot;Liberation Sans&quot;, sans-serif;font-size:11px;font-weight:bold;color:#000;transform:scaleX(1.0463);">Remover</div>
<div class="t" style="left:1049.15px;top:436.00px;font-family:&quot;DejaVu Sans&quot;, &quot;Liberation Sans&quot;, sans-serif;font-size:11px;font-weight:bold;color:#000;transform:scaleX(1.0968);">(F11)</div>
<svg style="left:1024px;top:379px" width="17" height="17" viewBox="1024 379 17 17"><rect x="1024.5" y="379.5" width="15" height="15" fill="#fff" stroke="#4aa3df"/><rect x="1025" y="380" width="14" height="2" fill="#a5d6f7"/><rect x="1027" y="383" width="4" height="5" fill="#1a6fc4"/><rect x="1033" y="384" width="5" height="1" fill="#c5d3e2"/><rect x="1027" y="389.5" width="4" height="3" fill="#d5dde8"/><circle cx="1035.5" cy="390.8" r="4.200" fill="#2a86d6" stroke="#fff" stroke-width="0.800"/><path d="M1035.5 388.3 V393.3 M1033.0 390.8 H1038.0" stroke="#fff" stroke-width="1.400" fill="none"/></svg>
<svg style="left:1015px;top:427px" width="17" height="17" viewBox="1015 427 17 17"><rect x="1015.5" y="427.5" width="15" height="15" fill="#fff" stroke="#4aa3df"/><rect x="1016" y="428" width="14" height="2" fill="#a5d6f7"/><rect x="1018" y="431" width="4" height="5" fill="#1a6fc4"/><rect x="1024" y="432" width="5" height="1" fill="#c5d3e2"/><rect x="1018" y="437.5" width="4" height="3" fill="#d5dde8"/><circle cx="1026.5" cy="438.8" r="4.200" fill="#8a8a8a" stroke="#fff" stroke-width="0.800"/><path d="M1024.8 437.1 L1028.2 440.5 M1028.2 437.1 L1024.8 440.5" stroke="#fff" stroke-width="1.400" fill="none"/></svg>
<div class="t" style="left:262.71px;top:544.00px;font-family:&quot;DejaVu Sans&quot;, &quot;Liberation Sans&quot;, sans-serif;font-size:11px;font-weight:normal;color:#0000ff;transform:scaleX(1.0449);">*Clique na linha do item para alterar quantidade e vlr. unitário.</div>
<div class="t" style="left:262.75px;top:576.00px;font-family:&quot;DejaVu Sans Condensed&quot;, &quot;Liberation Sans&quot;, sans-serif;font-size:11px;font-weight:bold;color:#000;transform:scaleX(0.9698);">Obs. Sobre o Crédito</div>
<div class="in" style="left:382px;top:575px;width:297px;height:35px;"></div>
<div class="sb" style="left:679px;top:575px;width:16px;height:16px;"></div>
<div class="sb" style="left:679px;top:594px;width:16px;height:16px;"></div>
<div class="dith" style="left:679px;top:591px;width:16px;height:3px;"></div>
<svg style="left:682px;top:580px" width="11" height="7" viewBox="682 580 11 7"><path d="M684 586 H691 L687.5 582.5 Z" fill="#fff"/><path d="M683 585 H690 L686.5 581.5 Z" fill="#808080"/></svg>
<svg style="left:682px;top:599px" width="11" height="7" viewBox="682 599 11 7"><path d="M684 601 H691 L687.5 604.5 Z" fill="#fff"/><path d="M683 600 H690 L686.5 603.5 Z" fill="#808080"/></svg>
<div class="t" style="left:262.75px;top:616.00px;font-family:&quot;DejaVu Sans Condensed&quot;, &quot;Liberation Sans&quot;, sans-serif;font-size:11px;font-weight:bold;color:#000;transform:scaleX(0.9882);">Tipo de Crédito</div>
<div class="sunk" style="left:518px;top:615px;width:177px;height:21px;"></div>
<div class="t" style="left:521.76px;top:620.00px;font-family:&quot;DejaVu Sans Condensed&quot;, &quot;Liberation Sans&quot;, sans-serif;font-size:11px;font-weight:bold;color:#000;transform:scaleX(0.9946);">Sobra de Crédito</div>
<div class="sb" style="left:677px;top:617px;width:16px;height:17px;"></div>
<svg style="left:681px;top:623px" width="8" height="5" viewBox="681 623 8 5"><path d="M681 623 H688 L684.500 626.500 Z" fill="#000"/></svg>
<div class="btn" style="left:262px;top:647px;width:193px;height:39px;"></div>
<svg style="left:292px;top:651px" width="34" height="30" viewBox="292 651 34 30"><defs><linearGradient id="pg" x1="0" y1="0" x2="0" y2="1"><stop offset="0" stop-color="#efefef"/><stop offset="1" stop-color="#d2d2d2"/></linearGradient><linearGradient id="pp" x1="0" y1="0" x2="0" y2="1"><stop offset="0" stop-color="#f1f1f1"/><stop offset="1" stop-color="#dcdcdc"/></linearGradient></defs><rect x="301.200" y="652.200" width="16.200" height="11" rx="1.200" fill="url(#pp)"/><rect x="293.100" y="660" width="31.400" height="19.600" rx="3.500" fill="url(#pg)"/><path d="M299.500 663 H318.500 Q320.600 663 320.800 665 L321.400 672.500 Q321.500 675.300 318.800 675.300 H299.200 Q296.500 675.300 296.600 672.500 L297.200 665 Q297.400 663 299.500 663 Z" fill="#0f7ac9"/><rect x="324.700" y="668.500" width="1.200" height="1.800" fill="#0f7ac9"/></svg>
<div class="t" style="left:326.90px;top:660.50px;font-family:&quot;DejaVu Sans&quot;, &quot;Liberation Sans&quot;, sans-serif;font-size:11px;font-weight:bold;color:#000;transform:scaleX(1.0495);">Extrato Pedido</div>
<div style="left:328px;top:672px;width:8px;height:1px;background:#000;"></div>
<div class="t" style="left:745.80px;top:552.00px;font-family:&quot;DejaVu Sans Condensed&quot;, &quot;Liberation Sans&quot;, sans-serif;font-size:11px;font-weight:bold;color:#000;transform:scaleX(1.0235);">Vlr Insumos (Moeda)</div>
<div class="t" style="left:719.26px;top:573.00px;font-family:&quot;DejaVu Sans Condensed&quot;, &quot;Liberation Sans&quot;, sans-serif;font-size:11px;font-weight:bold;color:#000;transform:scaleX(1.0377);">Desconto Total (Moeda) -</div>
<div class="t" style="left:751.30px;top:594.00px;font-family:&quot;DejaVu Sans Condensed&quot;, &quot;Liberation Sans&quot;, sans-serif;font-size:11px;font-weight:bold;color:#000;transform:scaleX(1.0294);">Vlr. Total (Moeda) =</div>
<div class="t" style="left:746.30px;top:616.00px;font-family:&quot;DejaVu Sans Condensed&quot;, &quot;Liberation Sans&quot;, sans-serif;font-size:11px;font-weight:bold;color:#000;">Vlr Crédito (Moeda) -</div>
<div class="t" style="left:711.31px;top:640.00px;font-family:&quot;DejaVu Sans Condensed&quot;, &quot;Liberation Sans&quot;, sans-serif;font-size:11px;font-weight:bold;color:#000;transform:scaleX(0.9947);">Líquido para o Financeiro =</div>
<div class="t" style="left:752.30px;top:659.00px;font-family:&quot;DejaVu Sans Condensed&quot;, &quot;Liberation Sans&quot;, sans-serif;font-size:11px;font-weight:bold;color:#000;transform:scaleX(1.0202);">Valor Total em R$ =</div>
<div class="gr" style="left:870px;top:551px;width:137px;height:19px;"></div>
<div class="gr" style="left:870px;top:572px;width:137px;height:19px;"></div>
<div class="gr" style="left:870px;top:593px;width:137px;height:19px;"></div>
<div class="in" style="left:870px;top:614px;width:137px;height:19px;"></div>
<div class="gr" style="left:870px;top:638px;width:137px;height:19px;"></div>
<div class="gr" style="left:870px;top:658px;width:137px;height:19px;"></div>
<div class="t" style="left:944.30px;top:553.00px;font-family:&quot;DejaVu Sans Condensed&quot;, &quot;Liberation Sans&quot;, sans-serif;font-size:11px;font-weight:bold;color:#000;transform:scaleX(0.9952);">809.473,50</div>
<div class="t" style="left:981.30px;top:575.00px;font-family:&quot;DejaVu Sans Condensed&quot;, &quot;Liberation Sans&quot;, sans-serif;font-size:11px;font-weight:bold;color:#000;transform:scaleX(0.9875);">0,00</div>
<div class="t" style="left:943.30px;top:596.00px;font-family:&quot;DejaVu Sans Condensed&quot;, &quot;Liberation Sans&quot;, sans-serif;font-size:11px;font-weight:bold;color:#808080;transform:scaleX(0.9952);text-shadow:1px 1px 0 #fff;">809.473,50</div>
<div class="t" style="left:981.30px;top:617.00px;font-family:&quot;DejaVu Sans Condensed&quot;, &quot;Liberation Sans&quot;, sans-serif;font-size:11px;font-weight:bold;color:#000;transform:scaleX(0.9875);">0,00</div>
<div class="t" style="left:937.80px;top:640.00px;font-family:&quot;DejaVu Sans Condensed&quot;, &quot;Liberation Sans&quot;, sans-serif;font-size:11px;font-weight:bold;color:#000;transform:scaleX(0.9884);">809.473,500</div>
<div class="t" style="left:924.25px;top:661.00px;font-family:&quot;DejaVu Sans&quot;, &quot;Liberation Sans&quot;, sans-serif;font-size:11px;font-weight:bold;color:#808080;transform:scaleX(1.0487);text-shadow:1px 1px 0 #fff;">809.473,500</div>
<div class="t" style="left:1006.80px;top:600.00px;font-family:&quot;DejaVu Sans Condensed&quot;, &quot;Liberation Sans&quot;, sans-serif;font-size:11px;font-weight:normal;color:#0000ff;transform:scaleX(0.9524);">* F10 para Editar</div>
</div>
</body>
</html>
